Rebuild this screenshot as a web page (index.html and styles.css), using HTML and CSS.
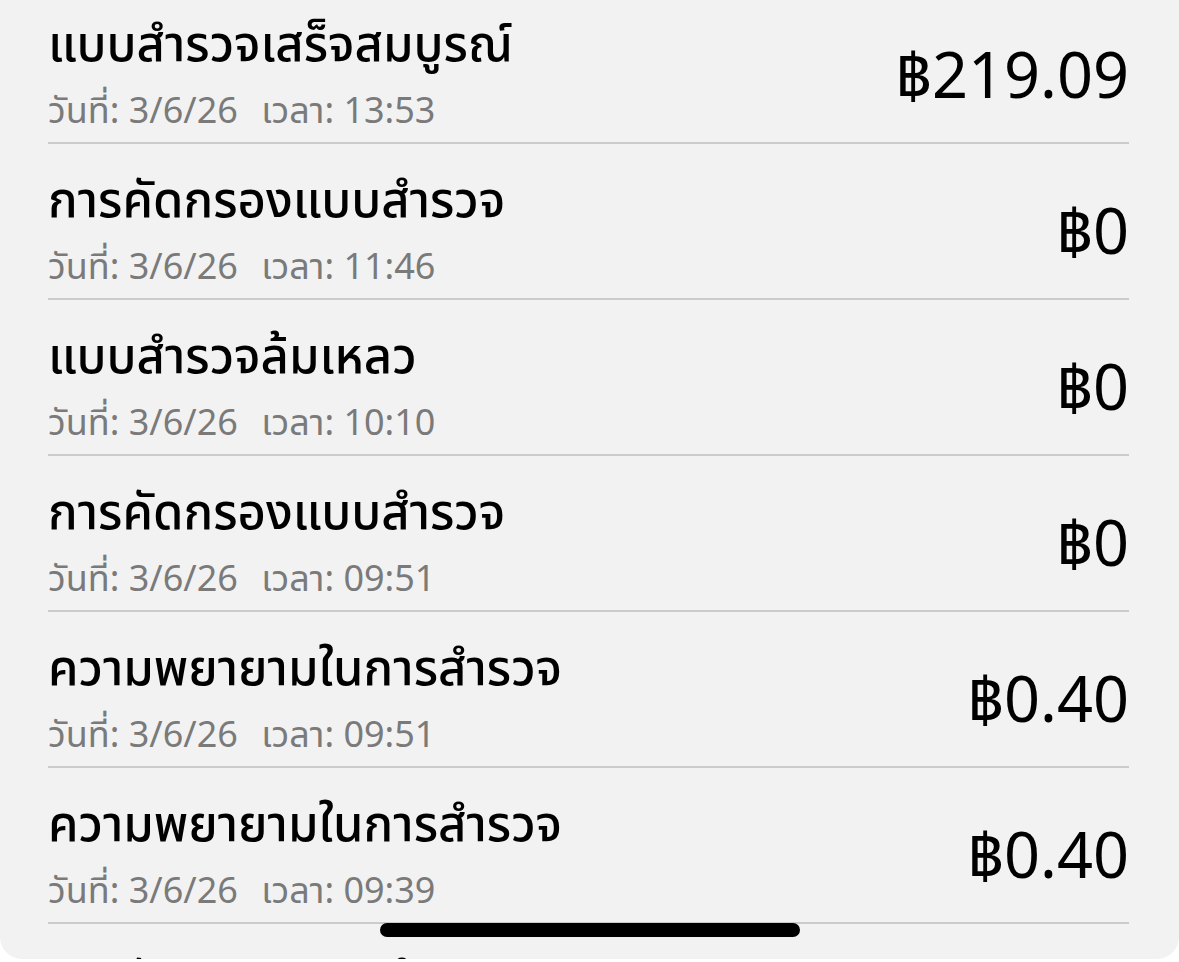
FILE: index.html
```html
<!DOCTYPE html>
<html lang="th">
    <head>
        <meta charset="UTF-8">
        <title>ประวัติรายได้</title>
        <link rel="stylesheet" href="styles.css">
    </head>
    <body>
    <div class="card">
        <ul class="list">
            <li class="row">
                <div class="info">
                    <p class="title">แบบสำรวจเสร็จสมบูรณ์</p>
                    <p class="meta">วันที่: 3/6/26 <span class="time">เวลา: 13:53</span></p>
                </div>
                <div class="amount">฿219.09</div>
            </li>
            <li class="row">
                <div class="info">
                    <p class="title">การคัดกรองแบบสำรวจ</p>
                    <p class="meta">วันที่: 3/6/26 <span class="time">เวลา: 11:46</span></p>
                </div>
                <div class="amount">฿0</div>
            </li>
            <li class="row">
                <div class="info">
                    <p class="title">แบบสำรวจล้มเหลว</p>
                    <p class="meta">วันที่: 3/6/26 <span class="time">เวลา: 10:10</span></p>
                </div>
                <div class="amount">฿0</div>
            </li>
            <li class="row">
                <div class="info">
                    <p class="title">การคัดกรองแบบสำรวจ</p>
                    <p class="meta">วันที่: 3/6/26 <span class="time">เวลา: 09:51</span></p>
                </div>
                <div class="amount">฿0</div>
            </li>
            <li class="row">
                <div class="info">
                    <p class="title">ความพยายามในการสำรวจ</p>
                    <p class="meta">วันที่: 3/6/26 <span class="time">เวลา: 09:51</span></p>
                </div>
                <div class="amount">฿0.40</div>
            </li>
            <li class="row">
                <div class="info">
                    <p class="title">ความพยายามในการสำรวจ</p>
                    <p class="meta">วันที่: 3/6/26 <span class="time">เวลา: 09:39</span></p>
                </div>
                <div class="amount">฿0.40</div>
            </li>
            <li class="row">
                <div class="info">
                    <p class="title">การคัดกรองแบบสำรวจ</p>
                    <p class="meta">วันที่: 3/6/26 <span class="time">เวลา: 09:30</span></p>
                </div>
                <div class="amount">฿0</div>
            </li>
        </ul>
    </div>
    <div class="home-bar"></div>
    </body>
</html>
```

FILE: styles.css
```css
*{
    margin:0;
    padding:0;
}
li{
    list-style:none;
}
body{
    background:#ffffff;
    font-family:"Noto Sans","Noto Sans Thai","Noto Sans CJK SC",sans-serif;
    color:#000000;
}
.card{
    height:959px;
    overflow:hidden;
    background:#f2f2f2;
    border-radius:0 0 22px 22px;
}
.list{
    margin-top:-12px;
}
.row{
    display:flex;
    align-items:center;
    justify-content:space-between;
    height:154px;
    margin:0 50px 0 48px;
    border-bottom:2px solid #cbcbcb;
}
.info{
    padding-top:16px;
}
.title{
    font-size:49px;
    line-height:62px;
    font-weight:500;
}
.meta{
    margin-top:12px;
    font-size:36px;
    line-height:50px;
    color:#7a7a7a;
}
.meta .time{
    margin-left:14px;
}
.amount{
    font-size:63px;
    line-height:72px;
    padding-top:18px;
}
.home-bar{
    position:fixed;
    left:380px;
    top:923px;
    width:420px;
    height:14px;
    border-radius:7px;
    background:#000000;
}
```
